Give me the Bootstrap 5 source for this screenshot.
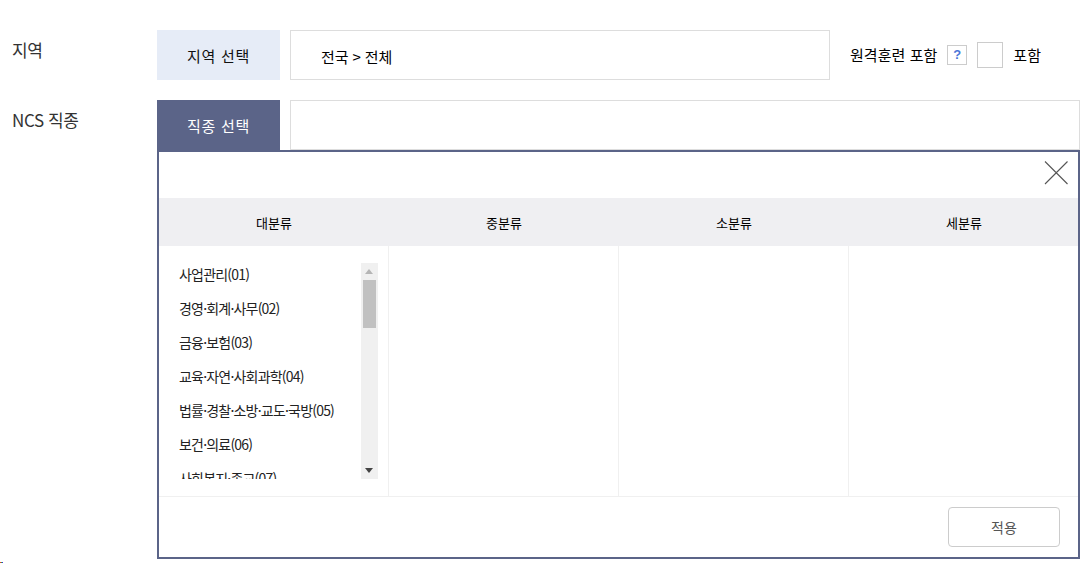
<!DOCTYPE html>
<html lang="ko">
<head>
<meta charset="utf-8">
<title>NCS 직종 선택</title>
<link href="https://cdn.jsdelivr.net/npm/bootstrap@5.3.0/dist/css/bootstrap.min.css" rel="stylesheet">
<style>
html,body{height:563px;overflow:hidden;background:#fff}
body{font-family:"Noto Sans CJK KR","Noto Sans",sans-serif;color:#000;font-size:15px;letter-spacing:-.3px}
.pg{padding:30px 1px 0 12px}
.frow{height:50px;margin-bottom:20px}
.flabel{width:145px;font-size:17px;color:#333;line-height:40px;letter-spacing:-.4px}
.pick{width:123px;height:50px;border:0;border-radius:0;font-size:15px;letter-spacing:.7px;padding:2px 0 0}
.pick-a{background:#e6ecf7;color:#111}
.pick-b{background:#5b6488;color:#fff}
.shown{height:50px;margin-left:10px;border:1px solid #ddd;padding-left:30px;line-height:52px;letter-spacing:-.1px}
.w540{width:540px}
.remote{margin-left:20px;font-size:15px;letter-spacing:.05px;height:50px}
.qbox{width:20px;height:20px;border:1px solid #ccc;color:#4a76d8;font-size:13px;font-weight:700;line-height:18px;margin:0 10px;text-align:center;font-family:"Liberation Sans",sans-serif}
.cbox{width:26px;height:26px;border:1px solid #ccc;margin-right:10px}
.panel{margin-left:145px;margin-top:-20px;height:409px;border:2px solid #5b6488;background:#fff;position:relative}
.phead{height:46px}
.bandrow{height:48px;background:#efeff2;font-size:13px;line-height:50px;letter-spacing:.1px}
.bandrow>div{flex:0 0 230px;text-align:center}
.lists{height:250px}
.lists>div{flex:0 0 230px;border-right:1px solid #f0f0f0;height:250px}
.lists>div:last-child{flex-basis:229px;border-right:0}
.scrollbox{width:219px;height:216px;margin-top:17px;padding-left:20px;overflow:hidden;position:relative}
.scrollbox>p{margin:0;height:34px;line-height:22px;font-size:14px;letter-spacing:-.8px;white-space:nowrap;color:#222}
.sbar{position:absolute;right:0;top:0;width:17px;height:216px;background:#f0f0f0}
.sthumb{position:absolute;left:2px;top:17px;width:13px;height:48px;background:#c1c1c1}
.sarrow{position:absolute;left:4px;width:0;height:0;border-left:4px solid transparent;border-right:4px solid transparent}
.sup{top:6px;border-bottom:5px solid #b5b5b5}
.sdown{bottom:6px;border-top:5px solid #444}
.pfoot{height:61px;border-top:1px solid #f0f0f0;padding:10px 18px 0 0}
.applybtn{width:112px;height:40px;border:1px solid #ccc;border-radius:4px;background:#fff;color:#555;font-size:14px;padding:0}
.xbtn{position:absolute;right:-1px;top:0;width:44px;height:44px;padding:0;background:none;border:0}
.speck{position:absolute;left:0;top:562px;width:3px;height:1px;background:linear-gradient(90deg,#e33 0 33%,#3a3 33% 66%,#33d 66%)}
</style>
</head>
<body>
<div class="pg">
  <div class="d-flex align-items-start frow">
    <div class="flabel">지역</div>
    <button class="btn pick pick-a" type="button">지역 선택</button>
    <div class="shown w540">전국 &gt; 전체</div>
    <div class="d-flex align-items-center remote">
      <span>원격훈련 포함</span>
      <span class="qbox">?</span>
      <span class="cbox"></span>
      <span>포함</span>
    </div>
  </div>
  <div class="d-flex align-items-start frow">
    <div class="flabel">NCS 직종</div>
    <button class="btn pick pick-b" type="button">직종 선택</button>
    <div class="shown flex-grow-1"></div>
  </div>
  <div class="panel">
    <div class="phead">
      <button class="xbtn" type="button" aria-label="닫기">
        <svg width="44" height="44" viewBox="0 0 44 44"><path d="M10 9.500 L32.500 32 M32.500 9.500 L10 32" stroke="#555" stroke-width="1.100" fill="none"/></svg>
      </button>
    </div>
    <div class="d-flex bandrow"><div>대분류</div><div>중분류</div><div>소분류</div><div>세분류</div></div>
    <div class="d-flex lists">
      <div>
        <div class="scrollbox">
          <p>사업관리(01)</p><p>경영·회계·사무(02)</p><p>금융·보험(03)</p><p>교육·자연·사회과학(04)</p><p>법률·경찰·소방·교도·국방(05)</p><p>보건·의료(06)</p><p>사회복지·종교(07)</p>
          <div class="sbar"><span class="sarrow sup"></span><span class="sthumb"></span><span class="sarrow sdown"></span></div>
        </div>
      </div>
      <div></div><div></div><div></div>
    </div>
    <div class="pfoot d-flex justify-content-end"><button class="btn applybtn" type="button">적용</button></div>
  </div>
</div>
<div class="speck"></div>
<script src="https://cdn.jsdelivr.net/npm/bootstrap@5.3.0/dist/js/bootstrap.bundle.min.js"></script>
</body>
</html>
